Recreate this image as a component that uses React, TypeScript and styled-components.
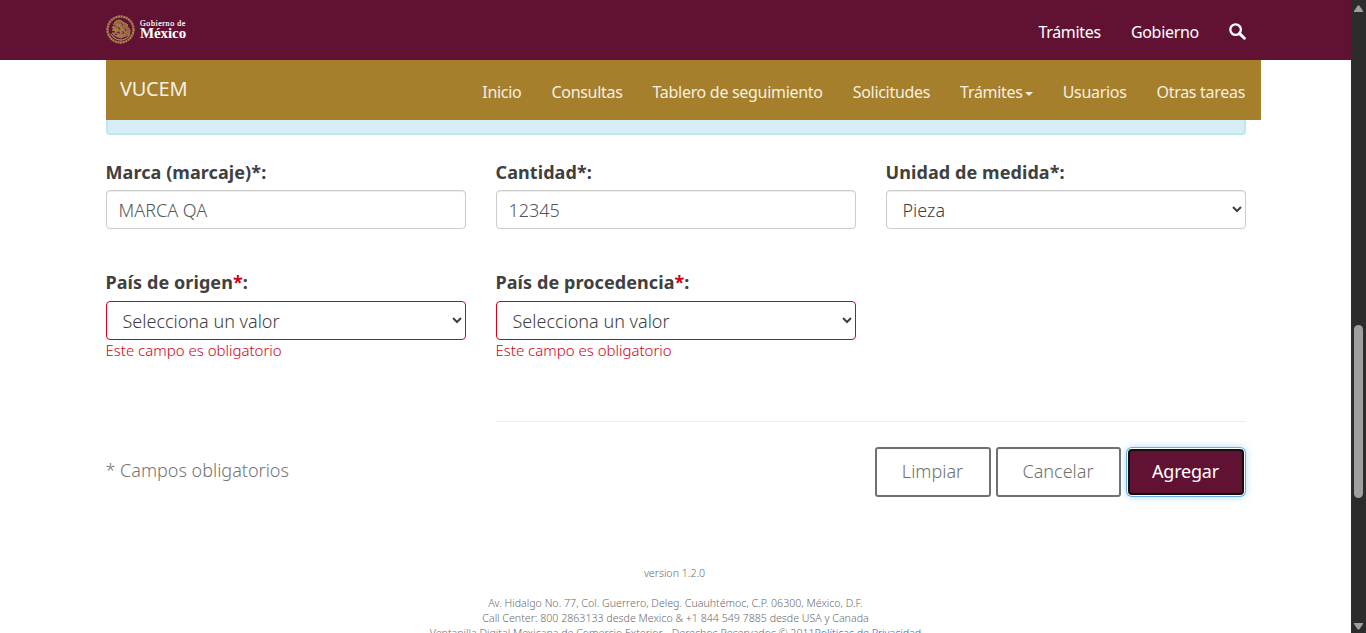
import React from "react";
import styled, { createGlobalStyle } from "styled-components";

const GlobalStyle = createGlobalStyle`
  *, *::before, *::after { box-sizing: border-box; }
  html, body { margin: 0; height: 100%; overflow: hidden; background: #fff; }
  body { font-family: "Noto Sans", "Open Sans", sans-serif; font-weight: 300; font-size: 18px; color: #545454; }
`;

const Window = styled.div`
  display: flex;
  height: 633px;
  overflow: hidden;
`;
const Page = styled.div`
  flex: 1;
  min-width: 0;
  height: 633px;
  overflow: hidden;
`;
const TopBar = styled.header`
  height: 60px;
  padding: 0 105px 0 106px;
  background: #611232;
  display: flex;
  justify-content: space-between;
  align-items: flex-start;
`;
const Brand = styled.div`
  display: flex;
  margin-top: 15px;
`;
const BrandText = styled.div`
  margin: 5px 0 0 5px;
  color: #fff;
  font-family: "Liberation Serif", serif;
`;
const BrandSmall = styled.div`
  font-size: 8px;
  line-height: 8px;
  font-weight: 400;
  letter-spacing: 0.56px;
  -webkit-text-stroke: 0.2px #fff;
`;
const BrandLarge = styled.div`
  font-size: 15px;
  line-height: 10px;
  font-weight: 700;
  letter-spacing: -0.1px;
`;
const TopNav = styled.nav`
  display: flex;
  gap: 30px;
  color: #fff;
  font-size: 16px;
  line-height: 24px;
  padding-top: 20px;
  font-weight: 400;
  letter-spacing: -0.3px;
`;
const SearchIcon = styled.svg`
  width: 17px;
  height: 17px;
  margin-top: 2.5px;
`;
const SubBar = styled.div`
  width: 1155px;
  height: 60px;
  margin-left: 106px;
  padding: 0 16px 0 14px;
  background: #a57f2c;
  color: #f6efe0;
  display: flex;
  justify-content: space-between;
  align-items: flex-start;
`;
const SubTitle = styled.div`
  font-size: 20px;
  line-height: 30px;
  padding-top: 14px;
  font-weight: 400;
  letter-spacing: -0.25px;
`;
const Menu = styled.nav`
  display: flex;
  gap: 30px;
  padding-top: 20px;
  font-size: 16px;
  line-height: 24px;
  font-weight: 400;
  letter-spacing: -0.3px;
`;
const MenuItem = styled.span`
  display: flex;
  align-items: center;
  white-space: nowrap;
`;
const Caret = styled.i`
  border: 4px solid transparent;
  border-top-color: currentColor;
  border-bottom: 0;
  margin: 3px 0 0 2px;
`;
const Content = styled.main`
  width: 1140px;
  margin-left: 106px;
`;
const Notice = styled.div`
  height: 15px;
  background: #d9edf7;
  border: 2px solid #bce8f1;
  border-top: 0;
  border-radius: 0 0 4px 4px;
`;
const Grid = styled.div`
  display: grid;
  grid-template-columns: repeat(3, 360px);
  column-gap: 30px;
  padding-top: 25px;
`;
const Field = styled.div<{ $tall?: boolean }>`
  display: flex;
  flex-direction: column;
  height: ${(p) => (p.$tall ? 111 : 110)}px;
`;
const Label = styled.label`
  font-size: 18px;
  line-height: 25px;
  font-weight: 700;
  color: #404041;
  margin-bottom: 5px;
  margin-left: -0.5px;
  letter-spacing: 0.08px;
`;
const Required = styled.span`
  color: #d0021b;
`;
const Input = styled.input`
  width: 100%;
  height: 39px;
  border: 1px solid #ccc;
  border-radius: 4px;
  padding: 6px 12px 6px 11.5px;
  font: 300 18px "Noto Sans", "Open Sans", sans-serif;
  color: #555;
  background: #fff;
  box-shadow: inset 0 1px 1px rgba(0, 0, 0, 0.075);
`;
const Select = styled.select<{ $error?: boolean }>`
  width: 100%;
  height: 39px;
  flex-shrink: 0;
  margin-top: ${(p) => (p.$error ? 1 : 0)}px;
  border: 1px solid ${(p) => (p.$error ? "#d0021b" : "#ccc")};
  border-radius: 4px;
  padding: 6px 12px 6px 11.5px;
  font: 300 18px "Noto Sans", "Open Sans", sans-serif;
  color: #404041;
  background: #fff;
  box-shadow: ${(p) => (p.$error ? "none" : "inset 0 1px 1px rgba(0, 0, 0, 0.075)")};
`;
const ErrorText = styled.small`
  font-size: 15px;
  line-height: 20px;
  margin-left: -0.5px;
  color: #d0021b;
`;
const Divider = styled.hr`
  margin: 40px 0 0 390px;
  border: 0;
  height: 1px;
  background: #eee;
`;
const Actions = styled.div`
  display: flex;
  justify-content: space-between;
  align-items: center;
  margin-top: 25px;
  height: 50px;
`;
const Hint = styled.p`
  margin: 0 0 5px -0.5px;
  color: #757575;
`;
const Buttons = styled.div`
  display: flex;
  gap: 5px;
`;
const Button = styled.button<{ $w: number; $primary?: boolean }>`
  width: ${(p) => p.$w}px;
  height: ${(p) => (p.$primary ? 46 : 50)}px;
  margin: ${(p) => (p.$primary ? "2px" : "0")};
  padding: 0 1px 2px 0;
  border: 2px solid ${(p) => (p.$primary ? "#101010" : "#6f7271")};
  border-radius: ${(p) => (p.$primary ? 4 : 3)}px;
  background: ${(p) => (p.$primary ? "#611232" : "#fff")};
  color: ${(p) => (p.$primary ? "#fff" : "#6f7271")};
  font: ${(p) => (p.$primary ? 400 : 300)} 18px "Noto Sans", "Open Sans", sans-serif;
  letter-spacing: ${(p) => (p.$primary ? "-0.2px" : "0")};
  box-shadow: ${(p) => (p.$primary ? "0 0 0 1px #fff, 0 0 0 2px #66afe9, 0 0 9px 1px rgba(102,175,233,.6)" : "none")};
`;
const Footer = styled.footer`
  text-align: center;
  font-size: 10.64px;
  line-height: 15px;
  color: #6a6a6a;
  margin-top: 69px;
`;
const Version = styled.div`
  margin: 0 2px 15px 0;
`;
const FooterLink = styled.a`
  color: #2554f4;
`;
const ScrollTrack = styled.div`
  width: 15px;
  height: 633px;
  background: #2c2c2c;
  display: flex;
  flex-direction: column;
  align-items: center;
`;
const ScrollThumb = styled.div`
  width: 9px;
  height: 173px;
  margin: 309px 0 auto;
  border-radius: 5px;
  background: #9f9f9f;
`;
const Arrow = styled.svg`
  width: 9px;
  height: 8px;
  flex-shrink: 0;
  margin: 5px 0 3px;
`;

const Seal = () => (
  <svg width="29" height="29" viewBox="0 0 29 29" fill="none" stroke="#a98151">
    <circle cx="14.5" cy="14.5" r="13" strokeWidth="2.3" strokeDasharray="2.2 .45" />
    <path d="M9 7c3-3 6-2 8 0l5 3-2 1c4 2 5 5 3 8-2 2-6 3-8 4-3-1-7-2-9-5 2 0 3 0 4-1-3-2-4-6-1-10z" fill="#956641" strokeWidth="1" />
    <path d="M10 9l6 4-2 6M6 12l6 3M6 15l6 1M13 10l4-2M16 14l4 4M5 19c3 5 7 6 10 6s7-2 9-6M10 20l5 1 4-2" strokeWidth="1.3" />
    <path d="M12 12l2 2M11 17l3 1M17 16l1 3M7 11l2-1M15 8l2 2M19 14l1 2M9 20l2-1" stroke="#611232" strokeWidth=".9" />
  </svg>
);

const menu = ["Inicio", "Consultas", "Tablero de seguimiento", "Solicitudes", "Trámites", "Usuarios", "Otras tareas"];

export default function App() {
  return (
    <Window>
      <GlobalStyle />
      <Page>
        <TopBar>
          <Brand>
            <Seal />
            <BrandText>
              <BrandSmall>Gobierno de</BrandSmall>
              <BrandLarge>México</BrandLarge>
            </BrandText>
          </Brand>
          <TopNav>
            <span>Trámites</span>
            <span>Gobierno</span>
            <SearchIcon viewBox="0 0 17 17" fill="none" stroke="#fff">
              <circle cx="6.6" cy="6.6" r="5.3" strokeWidth="2.3" />
              <path d="M10.6 10.6l4.8 4.6" strokeWidth="2.9" strokeLinecap="round" />
            </SearchIcon>
          </TopNav>
        </TopBar>
        <SubBar>
          <SubTitle>VUCEM</SubTitle>
          <Menu>
            {menu.map((m) => (
              <MenuItem key={m}>
                {m}
                {m === "Trámites" && <Caret />}
              </MenuItem>
            ))}
          </Menu>
        </SubBar>
        <Content>
          <Notice />
          <Grid>
            <Field>
              <Label>Marca (marcaje)*:</Label>
              <Input defaultValue="MARCA QA" />
            </Field>
            <Field>
              <Label>Cantidad*:</Label>
              <Input defaultValue="12345" />
            </Field>
            <Field>
              <Label>Unidad de medida*:</Label>
              <Select><option>Pieza</option></Select>
            </Field>
            {["País de origen", "País de procedencia"].map((name) => (
              <Field key={name} $tall>
                <Label>{name}<Required>*</Required>:</Label>
                <Select $error><option>Selecciona un valor</option></Select>
                <ErrorText>Este campo es obligatorio</ErrorText>
              </Field>
            ))}
          </Grid>
          <Divider />
          <Actions>
            <Hint>* Campos obligatorios</Hint>
            <Buttons>
              <Button $w={116}>Limpiar</Button>
              <Button $w={125}>Cancelar</Button>
              <Button $w={116} $primary>Agregar</Button>
            </Buttons>
          </Actions>
        </Content>
        <Footer>
          <Version>version 1.2.0</Version>
          <div>Av. Hidalgo No. 77, Col. Guerrero, Deleg. Cuauhtémoc, C.P. 06300, México, D.F.</div>
          <div>Call Center: 800 2863133 desde Mexico &amp; +1 844 549 7885 desde USA y Canada</div>
          <div>Ventanilla Digital Mexicana de Comercio Exterior - Derechos Reservados © 2011<FooterLink>Políticas de Privacidad</FooterLink></div>
        </Footer>
      </Page>
      <ScrollTrack>
        <Arrow viewBox="0 0 9 8"><path d="M3.7.5h1.6L9 6v1H0V6z" fill="#9f9f9f" /></Arrow>
        <ScrollThumb />
        <Arrow viewBox="0 0 9 8"><path d="M0 1h9v1L5.3 7.5H3.7L0 2z" fill="#9f9f9f" /></Arrow>
      </ScrollTrack>
    </Window>
  );
}
